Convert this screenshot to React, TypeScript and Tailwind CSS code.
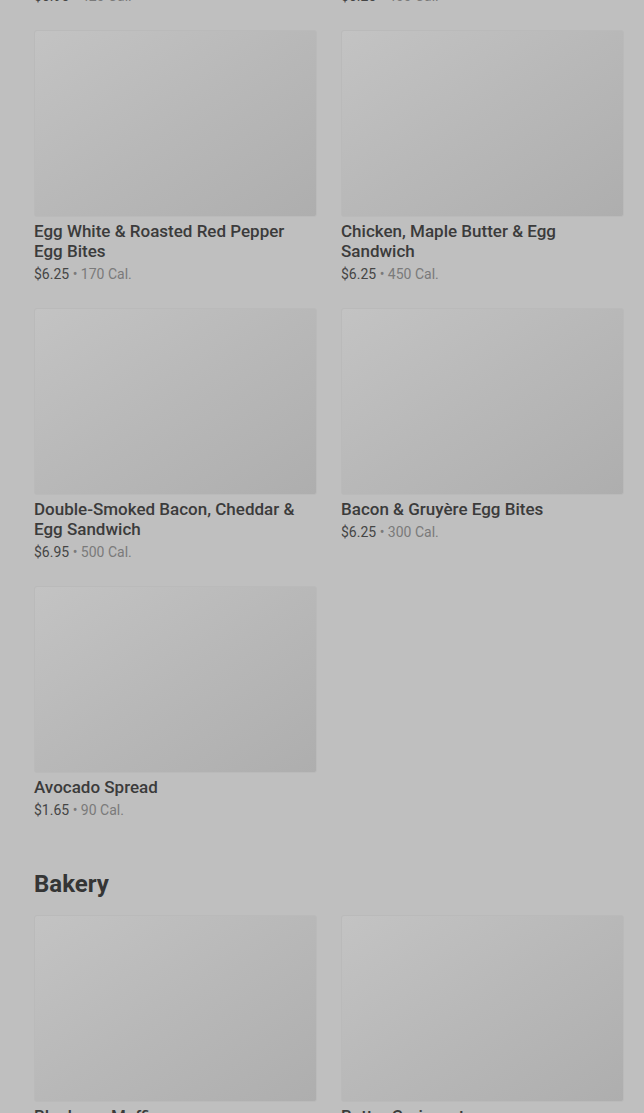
import React from 'react';

type Item = { name: string; price: string; cal: string };

const rows: Item[][] = [
  [
    { name: 'Egg White & Roasted Red Pepper Egg Bites', price: '$6.25', cal: '170 Cal.' },
    { name: 'Chicken, Maple Butter & Egg Sandwich', price: '$6.25', cal: '450 Cal.' },
  ],
  [
    { name: 'Double-Smoked Bacon, Cheddar & Egg Sandwich', price: '$6.95', cal: '500 Cal.' },
    { name: 'Bacon & Gruyère Egg Bites', price: '$6.25', cal: '300 Cal.' },
  ],
  [{ name: 'Avocado Spread', price: '$1.65', cal: '90 Cal.' }],
];

const bakery: Item[] = [
  { name: 'Blueberry Muffin', price: '$3.45', cal: '360 Cal.' },
  { name: 'Butter Croissant', price: '$3.75', cal: '260 Cal.' },
];

function Price({ price, cal }: { price: string; cal: string }) {
  return (
    <p className="text-[14px] leading-5">
      <span className="text-[#454545]">{price}</span>
      <span className="text-[#7a7a7a]"> • {cal}</span>
    </p>
  );
}

function Card({ item }: { item: Item }) {
  return (
    <div className="flex flex-col">
      {/* Image placeholder */}
      <div className="h-[187px] rounded-[3px] border border-[#bababa] bg-linear-to-br from-[#c3c3c3] via-[#b8b8b8] to-[#aeaeae]" />
      <h3 className="mt-1 text-[17px] leading-5 font-medium text-[#3b3b3b] pr-3">{item.name}</h3>
      <div className="mt-[3px]">
        <Price price={item.price} cal={item.cal} />
      </div>
    </div>
  );
}

export default function App() {
  return (
    <div
      className="min-h-screen h-[1113px] overflow-hidden bg-[#bfbfbf] pl-[34px] pr-5"
      style={{ fontFamily: 'Roboto, "Noto Sans", sans-serif' }}
    >
      {/* Tail of the previous row */}
      <div className="-mt-[14px] grid grid-cols-2 gap-x-6">
        <Price price="$6.95" cal="420 Cal." />
        <Price price="$6.25" cal="400 Cal." />
      </div>

      <div className="mt-6 flex flex-col gap-6">
        {rows.map((row, i) => (
          <div key={i} className="grid grid-cols-2 gap-x-6">
            {row.map((item) => (
              <Card key={item.name} item={item} />
            ))}
          </div>
        ))}
      </div>

      <h2 className="mt-[50px] mb-[17px] text-[24px] leading-7 font-bold text-[#353535]">
        Bakery
      </h2>

      <div className="grid grid-cols-2 gap-x-6">
        {bakery.map((item) => (
          <Card key={item.name} item={item} />
        ))}
      </div>
    </div>
  );
}
